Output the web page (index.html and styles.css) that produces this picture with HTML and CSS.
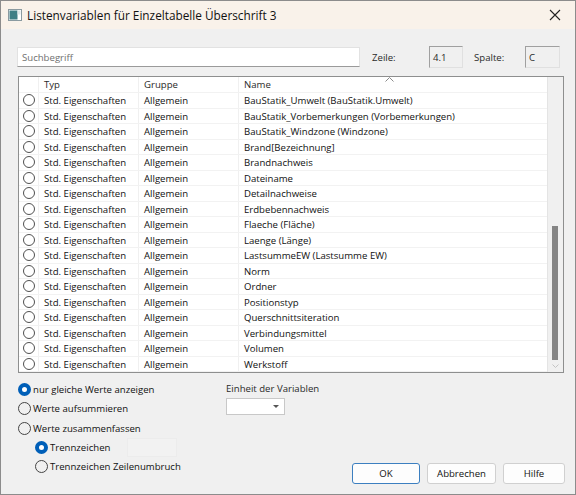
FILE: index.html
```html
<!DOCTYPE html>
<html lang="de">
<head>
  <meta charset="UTF-8" />
  <title>Listenvariablen für Einzeltabelle Überschrift 3</title>
  <link rel="stylesheet" href="styles.css">
</head>
<body>
  <div class="window">
    <div class="titlebar">
      <svg class="app-icon" width="14" height="12" viewBox="0 0 14 12">
        <rect x="0.5" y="0.5" width="13" height="11" fill="#fff" stroke="#8a9aa0" />
        <rect x="1.5" y="1.5" width="8" height="9" fill="#3f7f86" />
        <rect x="9.5" y="1.5" width="3" height="4" fill="#dfe8ea" />
      </svg>
      <span class="title">Listenvariablen für Einzeltabelle Überschrift 3</span>
      <svg class="close" width="12" height="12" viewBox="0 0 12 12">
        <path d="M1 1 L11 11 M11 1 L1 11" stroke="#222" stroke-width="1.1" />
      </svg>
    </div>

    <div class="content">
      <div class="search-row">
        <div class="search">Suchbegriff</div>
        <span class="lbl zeile">Zeile:</span>
        <div class="ro-box">4.1</div>
        <span class="lbl spalte">Spalte:</span>
        <div class="ro-box wide">C</div>
      </div>

      <div class="grid">
        <div class="grid-body">
          <div class="row head">
            <div class="c0"></div>
            <div class="c1">Typ</div>
            <div class="c2">Gruppe</div>
            <div class="c3">Name
              <svg class="sort" width="9" height="5" viewBox="0 0 9 5">
                <path d="M0.5 4.5 L4.5 0.5 L8.5 4.5" fill="none" stroke="#8a8a8a" stroke-width="1" />
              </svg>
            </div>
          </div>
          <div id="rows"></div>
        </div>
        <div class="vscroll">
          <div class="thumb"></div>
          <svg class="down" width="7" height="4" viewBox="0 0 7 4">
            <path d="M0.5 0.5 L3.5 3.5 L6.5 0.5" fill="none" stroke="#c4c4c4" stroke-width="1" />
          </svg>
        </div>
      </div>

      <div class="bottom">
        <div class="options">
          <label class="opt"><span class="radio on"></span>nur gleiche Werte anzeigen</label>
          <label class="opt"><span class="radio"></span>Werte aufsummieren</label>
          <label class="opt"><span class="radio"></span>Werte zusammenfassen</label>
          <label class="opt sub"><span class="radio on"></span>Trennzeichen<span class="sep-box"></span></label>
          <label class="opt sub"><span class="radio"></span>Trennzeichen Zeilenumbruch</label>
        </div>
        <div class="unit">
          <div>Einheit der Variablen</div>
          <div class="combo"><span class="caret"></span></div>
        </div>
        <div class="buttons">
          <button class="btn default">OK</button>
          <button class="btn">Abbrechen</button>
          <button class="btn">Hilfe</button>
        </div>
      </div>
    </div>
  </div>

  <script>
    var names = [
      'BauStatik_Umwelt (BauStatik.Umwelt)',
      'BauStatik_Vorbemerkungen (Vorbemerkungen)',
      'BauStatik_Windzone (Windzone)',
      'Brand[Bezeichnung]',
      'Brandnachweis',
      'Dateiname',
      'Detailnachweise',
      'Erdbebennachweis',
      'Flaeche (Fläche)',
      'Laenge (Länge)',
      'LastsummeEW (Lastsumme EW)',
      'Norm',
      'Ordner',
      'Positionstyp',
      'Querschnittsiteration',
      'Verbindungsmittel',
      'Volumen',
      'Werkstoff'
    ];
    var html = '';
    names.forEach(function (n) {
      html += '<div class="row"><div class="c0"><span class="ring"></span></div>' +
        '<div class="c1">Std. Eigenschaften</div><div class="c2">Allgemein</div>' +
        '<div class="c3">' + n + '</div></div>';
    });
    document.getElementById('rows').innerHTML = html;
  </script>
</body>
</html>
```

FILE: styles.css
```css
body {
  margin: 0;
  font-family: 'Open Sans', sans-serif;
  font-size: 9.6px;
  color: #111;
}

.window {
  width: 576px;
  height: 495px;
  box-sizing: border-box;
  border: 1px solid #8c8c8c;
  background: #f0f0f0;
  display: flex;
  flex-direction: column;
}

.titlebar {
  height: 28px;
  background: #f9f2ea;
  display: flex;
  align-items: center;
  padding: 0 8px 0 7px;
  flex-shrink: 0;
}

.app-icon {
  margin-right: 5px;
}

.title {
  font-size: 11.8px;
  flex: 1;
  color: #111;
}

.close {
  margin-right: 6px;
}

.content {
  flex: 1;
  padding: 17px 10px 0 16px;
  display: flex;
  flex-direction: column;
}

.search-row {
  display: flex;
  align-items: center;
  height: 22px;
}

.search {
  width: 343px;
  height: 20px;
  box-sizing: border-box;
  background: #fff;
  border: 1px solid #e2e2e2;
  border-bottom-color: #9a9a9a;
  color: #707070;
  padding: 3px 0 0 4px;
}

.lbl {
  color: #2a2a2a;
}

.zeile {
  margin-left: 12px;
  width: 57px;
}

.spalte {
  margin-left: 11px;
  width: 51px;
}

.ro-box {
  width: 34px;
  height: 22px;
  box-sizing: border-box;
  border: 1px solid #a0a0a0;
  border-right-color: #e0e0e0;
  border-bottom-color: #e0e0e0;
  padding: 4px 0 0 3px;
  color: #2a2a2a;
}

.ro-box.wide {
  width: 35px;
}

.grid {
  margin-top: 8px;
  margin-left: 1px;
  margin-right: 1px;
  height: 297px;
  box-sizing: border-box;
  border: 1px solid #8e8f8f;
  background: #fff;
  display: flex;
}

.grid-body {
  flex: 1;
  overflow: hidden;
}

.row {
  display: flex;
  height: 15.5px;
  line-height: 15px;
  border-bottom: 1px solid #f2f2f2;
  box-sizing: border-box;
  white-space: nowrap;
}

.row.head {
  height: 16px;
  color: #2a2a2a;
}

.row div {
  border-right: 1px solid #f0f0f0;
  box-sizing: border-box;
  padding-left: 5px;
  overflow: hidden;
}

.row .c0 { width: 20px; padding: 0; display: flex; align-items: center; justify-content: center; }
.row .c1 { width: 100px; }
.row .c2 { width: 100px; }
.row .c3 { flex: 1; position: relative; border-right: 0; }

.ring {
  width: 12px;
  height: 12px;
  border: 1px solid #505050;
  border-radius: 50%;
  box-sizing: border-box;
}

.sort {
  position: absolute;
  left: 146px;
  top: 0;
}

.vscroll {
  width: 15px;
  background: #f0f0f0;
  border-left: 1px solid #e4e4e4;
  position: relative;
}

.thumb {
  position: absolute;
  left: 4px;
  top: 149px;
  width: 6px;
  height: 134px;
  background: #858585;
}

.down {
  position: absolute;
  left: 4px;
  top: 287px;
}

.bottom {
  flex: 1;
  display: flex;
  position: relative;
  padding-top: 7px;
}

.options {
  width: 208px;
  display: flex;
  flex-direction: column;
}

.opt {
  display: flex;
  align-items: center;
  height: 19.3px;
}

.opt.sub {
  padding-left: 17px;
}

.radio {
  width: 13px;
  height: 13px;
  border-radius: 50%;
  border: 1px solid #444;
  box-sizing: border-box;
  margin-right: 2px;
  margin-left: 1px;
}

.radio.on {
  border: 4px solid #005fb8;
  background: #fff;
}

.sep-box {
  width: 48px;
  height: 17px;
  margin-left: 17px;
  background: #f2f2f2;
  border: 1px solid #ececec;
}

.unit {
  padding-top: 2px;
  padding-left: 1px;
  color: #2a2a2a;
}

.combo {
  margin-top: 3px;
  width: 59px;
  height: 17px;
  box-sizing: border-box;
  background: #fff;
  border: 1px solid #c8c8c8;
  position: relative;
}

.caret {
  position: absolute;
  right: 5px;
  top: 6px;
  border-left: 3px solid transparent;
  border-right: 3px solid transparent;
  border-top: 3px solid #555;
}

.buttons {
  position: absolute;
  right: 0;
  bottom: 10px;
  display: flex;
  gap: 7px;
}

.btn {
  width: 69px;
  height: 21px;
  background: #fdfdfd;
  border: 1px solid #d0d0d0;
  border-radius: 3px;
  font-family: inherit;
  font-size: 9.6px;
  color: #111;
  padding: 0;
}

.btn.default {
  width: 68px;
  border-color: #3c7fc0;
}

.btn:last-child {
  width: 62px;
}
```
